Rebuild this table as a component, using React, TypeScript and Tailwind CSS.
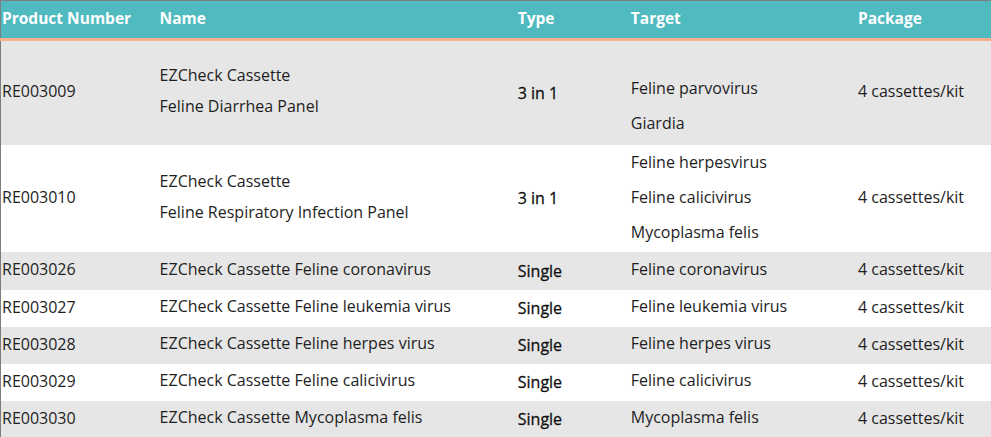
const rows = [
  { no: "RE003009", name: ["EZCheck Cassette", "Feline Diarrhea Panel"], type: "3 in 1", target: ["Feline parvovirus", "Giardia"], h: "h-[105px]", tAlign: "align-bottom pb-[4px]" },
  { no: "RE003010", name: ["EZCheck Cassette", "Feline Respiratory Infection Panel"], type: "3 in 1", target: ["Feline herpesvirus", "Feline calicivirus", "Mycoplasma felis"], h: "h-[107px]", tAlign: "align-middle pb-[2px]" },
  { no: "RE003026", name: ["EZCheck Cassette Feline coronavirus"], type: "Single", target: ["Feline coronavirus"], h: "h-[38px]", tAlign: "align-middle" },
  { no: "RE003027", name: ["EZCheck Cassette Feline leukemia virus"], type: "Single", target: ["Feline leukemia virus"], h: "h-[37px]", tAlign: "align-middle" },
  { no: "RE003028", name: ["EZCheck Cassette Feline herpes virus"], type: "Single", target: ["Feline herpes virus"], h: "h-[37px]", tAlign: "align-middle" },
  { no: "RE003029", name: ["EZCheck Cassette Feline calicivirus"], type: "Single", target: ["Feline calicivirus"], h: "h-[37px]", tAlign: "align-middle" },
  { no: "RE003030", name: ["EZCheck Cassette Mycoplasma felis"], type: "Single", target: ["Mycoplasma felis"], h: "h-[37px]", tAlign: "align-middle" },
];

export default function App() {
  return (
    <div className="w-[991px] h-[437px] overflow-hidden bg-white font-['Open_Sans',sans-serif] text-[16px] text-[#1e1e1e]">
      <table className="w-[991px] table-fixed border-collapse border-t border-l border-[#7d7d7d]">
        <colgroup>
          <col className="w-[157px]" />
          <col className="w-[358px]" />
          <col className="w-[113px]" />
          <col className="w-[227px]" />
          <col className="w-[135px]" />
        </colgroup>
        <thead>
          <tr className="h-[39px] bg-[#4fbac0] text-white text-[15.5px] border-b-[3px] border-[#f8b08b]">
            <th className="p-0 pl-[1px] pb-[2px] text-left font-bold whitespace-nowrap">Product Number</th>
            <th className="p-0 pl-[2px] pb-[2px] text-left font-bold">Name</th>
            <th className="p-0 pl-[2px] pb-[2px] text-left font-bold">Type</th>
            <th className="p-0 pl-[2px] pb-[2px] text-left font-bold">Target</th>
            <th className="p-0 pl-[2px] pb-[2px] text-left font-bold">Package</th>
          </tr>
        </thead>
        <tbody>
          {rows.map((r, i) => (
            <tr key={r.no} className={`${r.h} ${i % 2 === 0 ? "bg-[#e6e6e6]" : "bg-white"}`}>
              <td className="p-0 pl-[1px] pb-[3px] align-middle">{r.no}</td>
              <td className="p-0 pl-[2px] pb-[3px] align-middle">
                {r.name.map((n) => (
                  <div key={n} className="leading-[31px]">{n}</div>
                ))}
              </td>
              <td className="p-0 pl-[2px] align-middle text-[#111] [-webkit-text-stroke:0.3px_#111]">{r.type}</td>
              <td className={`p-0 pl-[2px] ${r.tAlign}`}>
                {r.target.map((t) => (
                  <div key={t} className={r.target.length > 1 ? "leading-[35px] h-[35px]" : "leading-[31px] pb-[3px]"}>{t}</div>
                ))}
              </td>
              <td className="p-0 pl-[2px] pb-[3px] align-middle whitespace-nowrap">4 cassettes/kit</td>
            </tr>
          ))}
        </tbody>
      </table>
    </div>
  );
}
